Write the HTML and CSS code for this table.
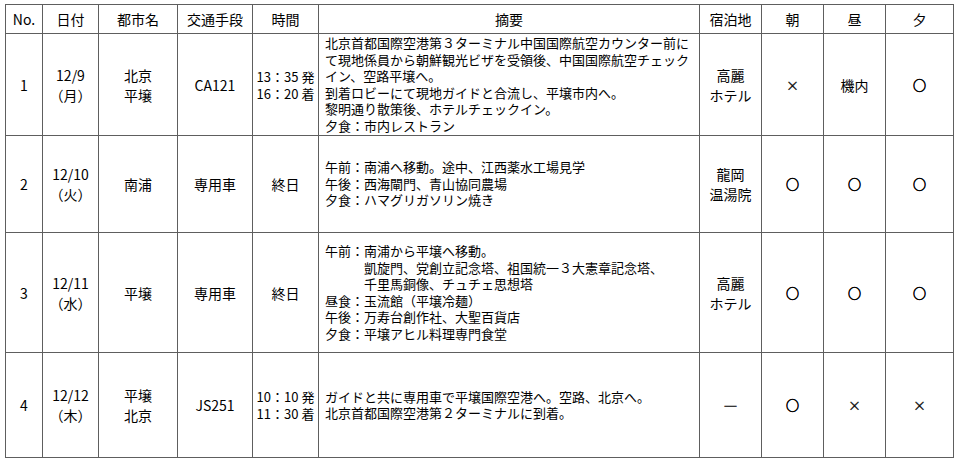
FILE: index.html
```html
<!DOCTYPE html>
<html lang="ja">
<head>
<meta charset="utf-8">
<link rel="stylesheet" href="styles.css">
</head>
<body>
<table class="itinerary">
  <colgroup>
    <col class="c-no"><col class="c-date"><col class="c-city"><col class="c-trans"><col class="c-time"><col class="c-sum"><col class="c-hotel"><col class="c-meal"><col class="c-meal"><col class="c-meal2">
  </colgroup>
  <thead>
    <tr class="r-head">
      <th>No.</th><th>日付</th><th>都市名</th><th>交通手段</th><th>時間</th><th>摘要</th><th>宿泊地</th><th>朝</th><th>昼</th><th>夕</th>
    </tr>
  </thead>
  <tbody>
    <tr class="r1">
      <td>1</td>
      <td class="two">12/9<br>（月）</td>
      <td class="two">北京<br>平壌</td>
      <td>CA121</td>
      <td class="time">13：35 発<br>16：20 着</td>
      <td class="sum">北京首都国際空港第３ターミナル中国国際航空カウンター前にて現地係員から朝鮮観光ビザを受領後、中国国際航空チェックイン、空路平壌へ。<br>到着ロビーにて現地ガイドと合流し、平壌市内へ。<br>黎明通り散策後、ホテルチェックイン。<br>夕食：市内レストラン</td>
      <td class="two">高麗<br>ホテル</td>
      <td class="x">×</td>
      <td>機内</td>
      <td class="o">○</td>
    </tr>
    <tr class="r2">
      <td>2</td>
      <td class="two">12/10<br>（火）</td>
      <td>南浦</td>
      <td>専用車</td>
      <td>終日</td>
      <td class="sum">午前：南浦へ移動。途中、江西薬水工場見学<br>午後：西海閘門、青山協同農場<br>夕食：ハマグリガソリン焼き</td>
      <td class="two">龍岡<br>温湯院</td>
      <td class="o">○</td>
      <td class="o">○</td>
      <td class="o">○</td>
    </tr>
    <tr class="r3">
      <td>3</td>
      <td class="two">12/11<br>（水）</td>
      <td>平壌</td>
      <td>専用車</td>
      <td>終日</td>
      <td class="sum">午前：南浦から平壌へ移動。<br><span class="ind">凱旋門、党創立記念塔、祖国統一３大憲章記念塔、</span><br><span class="ind">千里馬銅像、チュチェ思想塔</span><br>昼食：玉流館（平壌冷麺）<br>午後：万寿台創作社、大聖百貨店<br>夕食：平壌アヒル料理専門食堂</td>
      <td class="two">高麗<br>ホテル</td>
      <td class="o">○</td>
      <td class="o">○</td>
      <td class="o">○</td>
    </tr>
    <tr class="r4">
      <td>4</td>
      <td class="two">12/12<br>（木）</td>
      <td class="two">平壌<br>北京</td>
      <td>JS251</td>
      <td class="time">10：10 発<br>11：30 着</td>
      <td class="sum">ガイドと共に専用車で平壌国際空港へ。空路、北京へ。<br>北京首都国際空港第２ターミナルに到着。</td>
      <td class="dash">―</td>
      <td class="o">○</td>
      <td class="x">×</td>
      <td class="x">×</td>
    </tr>
  </tbody>
</table>
</body>
</html>
```

FILE: styles.css
```css
html, body {
  margin: 0;
  padding: 0;
  background: #ffffff;
}
body {
  padding: 4px 0 0 5px;
  font-family: "Noto Sans CJK JP", "Noto Sans", sans-serif;
  color: #000000;
}
.itinerary {
  border-collapse: collapse;
  table-layout: fixed;
  width: 949px;
  border: 1px solid #8a8a8a;
}
.c-no { width: 37px; }
.c-date { width: 56px; }
.c-city { width: 79px; }
.c-trans { width: 75px; }
.c-time { width: 66px; }
.c-sum { width: 381px; }
.c-hotel { width: 62px; }
.c-meal { width: 62px; }
.c-meal2 { width: 68px; }
th, td {
  border: 1px solid #5e5e5e;
  padding: 0;
  text-align: center;
  vertical-align: middle;
  font-size: 14px;
  line-height: 20px;
  font-weight: 400;
  overflow: hidden;
}
th {
  height: 28px;
  font-size: 14px;
}
.r1 td { height: 101px; }
.r2 td { height: 96px; }
.r3 td { height: 119px; }
.r4 td { height: 104px; }
td.time {
  font-size: 13px;
  line-height: 17px;
  white-space: nowrap;
}
td.sum {
  text-align: left;
  font-size: 13px;
  line-height: 16.5px;
  padding: 0 6px 0 6px;
}
.ind {
  padding-left: 39px;
}
td.x {
  font-size: 13px;
  -webkit-text-stroke: 0.3px #000;
}
td.o {
  font-size: 13px;
  -webkit-text-stroke: 0.7px #000;
}
td.dash {
  font-size: 14px;
  -webkit-text-stroke: 0.3px #000;
}
```
